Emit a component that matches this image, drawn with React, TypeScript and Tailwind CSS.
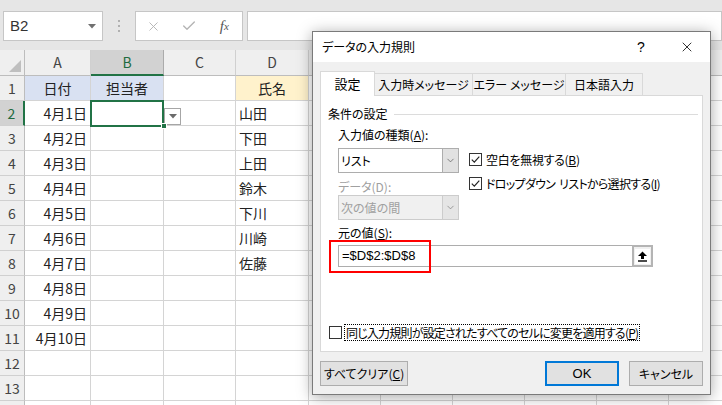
import { X, Check, ChevronDown } from "lucide-react";

const jp = "font-['Noto_Sans_CJK_JP',sans-serif]";

const cols = [
  { key: "A", w: "w-[66px]", label: "A" },
  { key: "B", w: "w-[73px]", label: "B" },
  { key: "C", w: "w-[72px]", label: "C" },
  { key: "D", w: "w-[73px]", label: "D" },
  // E–J sit under the dialog, their letters are never seen
  { key: "E", w: "w-[72px]", label: "" },
  { key: "F", w: "w-[72px]", label: "" },
  { key: "G", w: "w-[72px]", label: "" },
  { key: "H", w: "w-[72px]", label: "" },
  { key: "I", w: "w-[72px]", label: "" },
  { key: "J", w: "w-[72px]", label: "" },
];

interface Row {
  n: number;
  a?: string;
  b?: string;
  d?: string;
}

const rows: Row[] = [
  { n: 1, a: "日付", b: "担当者", d: "氏名" },
  { n: 2, a: "4月1日", d: "山田" },
  { n: 3, a: "4月2日", d: "下田" },
  { n: 4, a: "4月3日", d: "上田" },
  { n: 5, a: "4月4日", d: "鈴木" },
  { n: 6, a: "4月5日", d: "下川" },
  { n: 7, a: "4月6日", d: "川崎" },
  { n: 8, a: "4月7日", d: "佐藤" },
  { n: 9, a: "4月8日" },
  { n: 10, a: "4月9日" },
  { n: 11, a: "4月10日" },
  { n: 12 },
  { n: 13 },
  { n: 14 },
];

function CheckBox({ checked }: { checked: boolean }) {
  return (
    <div className="w-[13px] h-[13px] border border-[#333] bg-white flex items-center justify-center shrink-0">
      {checked && (
        <svg width="11" height="11" viewBox="0 0 11 11">
          <path d="M1.8 5.6 L4.3 8.1 L9.3 2.6" fill="none" stroke="#222" strokeWidth="1.2" />
        </svg>
      )}
    </div>
  );
}

function Cell({ row, col }: { row: Row; col: string }) {
  const w = cols.find((c) => c.key === col)!.w;
  let text = "";
  let cls = "";
  if (row.n === 1) {
    if (col === "A") { text = row.a!; cls = "bg-[#d9e1f2] justify-center"; }
    if (col === "B") { text = row.b!; cls = "bg-[#d9e1f2] justify-center"; }
    if (col === "D") { text = row.d!; cls = "bg-[#fff2cc] justify-center"; }
  } else {
    if (col === "A" && row.a) { text = row.a; cls = "justify-end pr-[3px]"; }
    if (col === "D" && row.d) { text = row.d; cls = "justify-start pl-[3px]"; }
  }
  const selected = row.n === 2 && col === "B";
  return (
    <div className={`${w} shrink-0 h-full border-r border-b border-[#d4d4d4] flex items-center ${cls} relative`}>
      {text}
      {selected && (
        <>
          <div className="absolute left-[-1px] top-[-1px] w-[74px] h-[27px] border-2 border-[#217346] z-10" />
          <div className="absolute right-[-4px] bottom-[-4px] w-[6px] h-[6px] bg-[#217346] border border-white z-20" />
          <div className="absolute left-[73px] top-[7px] w-[17px] h-[17px] bg-white border border-[#a6a6a6] flex items-center justify-center z-10">
            <svg width="8" height="5" viewBox="0 0 8 5">
              <path d="M0 0 H8 L4 4.5 Z" fill="#6b6b6b" />
            </svg>
          </div>
        </>
      )}
    </div>
  );
}

function Sheet() {
  return (
    <div className={`${jp} text-[14px] text-[#222]`}>
      {/* toolbar */}
      <div className="h-[50px] bg-[#e6e6e6] flex items-start pt-[11px] pl-[3px]">
        <div className="w-[100px] h-[30px] bg-white border border-[#c6c6c6] flex items-center pl-[6px] pr-[6px] text-[15px] text-[#333] font-['Liberation_Sans',sans-serif]">
          B2
          <svg className="ml-auto" width="8" height="5" viewBox="0 0 8 5">
            <path d="M0 0 H8 L4 4.5 Z" fill="#707070" />
          </svg>
        </div>
        <div className="w-[32px] h-[30px] flex flex-col items-center justify-center gap-[3px]">
          <div className="w-[2px] h-[2px] bg-[#b0b0b0]" />
          <div className="w-[2px] h-[2px] bg-[#b0b0b0]" />
          <div className="w-[2px] h-[2px] bg-[#b0b0b0]" />
        </div>
        <div className="w-[108px] h-[30px] bg-white border border-[#c6c6c6] flex items-center">
          <div className="w-[36px] flex justify-center text-[#b4b4b4]"><X size={15} strokeWidth={1.5} /></div>
          <div className="w-[36px] flex justify-center text-[#b4b4b4]"><Check size={16} strokeWidth={2} /></div>
          <div className="w-[36px] flex justify-center text-[#555] font-['Liberation_Serif',serif] italic text-[15px]">
            f<span className="text-[11px] mt-[3px]">x</span>
          </div>
        </div>
        <div className="flex-1 ml-[4px] h-[30px] bg-white border border-[#c6c6c6]" />
      </div>

      {/* column headers */}
      <div className="h-[26px] flex bg-[#efefef]">
        <div className="w-[25px] shrink-0 h-full border-r border-b border-[#bdbdbd] flex items-end justify-end p-[3px]">
          <svg width="12" height="12" viewBox="0 0 12 12">
            <path d="M12 0 V12 H0 Z" fill="#bfbfbf" />
          </svg>
        </div>
        {cols.map((c) => (
          <div
            key={c.key}
            className={`${c.w} shrink-0 h-full border-r flex items-center justify-center ${
              c.key === "B"
                ? "bg-[#d2d2d2] border-b-2 border-b-[#217346] border-r-[#ababab] text-[#1e6b40]"
                : "border-b border-[#d0d0d0] border-b-[#bdbdbd] text-[#444]"
            }`}
          >
            {c.label}
          </div>
        ))}
      </div>

      {/* rows */}
      {rows.map((r) => (
        <div key={r.n} className="h-[25px] flex">
          <div
            className={`w-[25px] shrink-0 h-full border-b border-[#d0d0d0] flex items-center justify-center ${
              r.n === 2
                ? "bg-[#d2d2d2] border-r-2 border-r-[#217346] text-[#1e6b40]"
                : "bg-[#efefef] border-r border-r-[#bdbdbd] text-[#444]"
            }`}
          >
            {r.n < 14 ? r.n : ""}
          </div>
          {cols.map((c) => (
            <Cell key={c.key} row={r} col={c.key} />
          ))}
        </div>
      ))}
    </div>
  );
}

function Dialog() {
  const tabs = ["入力時メッセージ", "エラー メッセージ", "日本語入力"];
  const tabW = ["w-[98px]", "w-[93px]", "w-[77px]"];
  return (
    <div
      className={`absolute left-[312px] top-[31px] w-[399px] h-[364px] border border-[#7a7a7a] bg-[#f0f0f0] shadow-[0_2px_14px_rgba(0,0,0,0.35)] flex flex-col ${jp} [font-feature-settings:'palt'] text-[12px] text-black z-30`}
    >
      {/* title */}
      <div className="h-[30px] bg-white flex items-center shrink-0">
        <div className="pl-[9px] text-[12px]">データの入力規則</div>
        <div className="ml-auto w-[46px] flex justify-center text-[14px] font-['Liberation_Sans',sans-serif]">?</div>
        <div className="w-[46px] flex justify-center">
          <X size={16} strokeWidth={1.2} />
        </div>
      </div>

      {/* tabs */}
      <div className="flex items-end px-[7px] pt-[9px] relative z-10">
        <div className="w-[55px] h-[25px] bg-white border border-[#d9d9d9] border-b-0 mb-[-1px] flex items-center justify-center text-[13px]">
          設定
        </div>
        {tabs.map((t, i) => (
          <div
            key={t}
            className={`${tabW[i]} h-[22px] bg-[#f0f0f0] border border-[#d9d9d9] border-l-0 border-b-0 flex items-center justify-center text-[12px] whitespace-nowrap`}
          >
            {t}
          </div>
        ))}
      </div>

      {/* panel */}
      <div className="mx-[7px] h-[257px] bg-white border border-[#d9d9d9] shrink-0 flex flex-col">
        <div className="mt-[10px] h-[16px] flex items-center pl-[7px]">
          <span>条件の設定</span>
          <div className="flex-1 ml-[6px] mr-[4px] border-t border-[#dcdcdc]" />
        </div>

        <div className="pl-[17px] flex flex-col">
          <div className="mt-[5px] h-[16px] flex items-center">
            入力値の種類(<span className="underline">A</span>):
          </div>
          <div className="flex">
            <div className="flex flex-col w-[121px]">
              <div className="mt-[5px] h-[25px] bg-white border border-[#adadad] flex items-center">
                <span className="pl-[2px] flex-1">リスト</span>
                <div className="w-[16px] h-full bg-[#e1e1e1] border-l border-[#adadad] flex items-center justify-center text-[#555]">
                  <ChevronDown size={11} strokeWidth={1.5} />
                </div>
              </div>
              <div className="mt-[6px] h-[16px] flex items-center text-[#a0a0a0]">データ(D):</div>
              <div className="h-[25px] bg-[#f0f0f0] border border-[#cccccc] flex items-center text-[#a0a0a0]">
                <span className="pl-[2px] flex-1">次の値の間</span>
                <div className="w-[16px] h-full bg-[#e5e5e5] border-l border-[#cccccc] flex items-center justify-center text-[#777]">
                  <ChevronDown size={11} strokeWidth={1.5} />
                </div>
              </div>
            </div>
            <div className="ml-[10px] pt-[10px] flex flex-col gap-[11px]">
              <div className="h-[13px] flex items-center gap-[4px]">
                <CheckBox checked />
                <span className="tracking-[-0.3px]">空白を無視する(<span className="underline">B</span>)</span>
              </div>
              <div className="h-[13px] flex items-center gap-[4px]">
                <CheckBox checked />
                <span className="tracking-[-0.7px] whitespace-nowrap">
                  ドロップダウン<span className="ml-[4px]">リストから選択する(<span className="underline">I</span>)</span>
                </span>
              </div>
            </div>
          </div>
          <div className="mt-[5px] h-[16px] flex items-center">
            元の値(<span className="underline">S</span>):
          </div>
          <div className="mt-[4px] w-[315px] h-[22px] bg-white border border-[#adadad] flex items-center relative">
            <span className="pl-[3px] flex-1 text-[13px] font-['Liberation_Sans',sans-serif]">=$D$2:$D$8</span>
            <div className="w-[21px] h-[22px] mr-[-1px] border-2 border-[#b4b4b4] bg-[#f0f0f0] flex items-center justify-center">
              <div className="w-[15px] h-[15px] bg-white flex items-center justify-center">
                <svg width="11" height="11" viewBox="0 0 11 11">
                  <path d="M5.5 0.5 L10 5 H7 V8 H4 V5 H1 Z" fill="#000" />
                  <rect x="1" y="9.3" width="9" height="1.4" fill="#000" />
                </svg>
              </div>
            </div>
            <div className="absolute left-[-10px] top-[-6px] w-[102px] h-[33px] border-2 border-[#ff0000]" />
          </div>
        </div>

        <div className="mt-[57px] pl-[8px] h-[17px] flex items-center">
          <CheckBox checked={false} />
          <span className="ml-[2px] h-[17px] flex items-center px-[1px] border border-dotted border-black tracking-[-0.8px] whitespace-nowrap">
            同じ入力規則が設定されたすべてのセルに変更を適用する(<span className="underline">P</span>)
          </span>
        </div>
      </div>

      {/* buttons */}
      <div className="mt-[9px] px-[7px] flex">
        <div className="w-[88px] h-[25px] bg-[#e1e1e1] border border-[#adadad] flex items-center justify-center">
          すべてクリア(<span className="underline">C</span>)
        </div>
        <div className="ml-auto w-[74px] h-[25px] bg-[#e1e1e1] border-2 border-[#0078d7] flex items-center justify-center font-['Liberation_Sans',sans-serif] text-[13px]">
          OK
        </div>
        <div className="ml-[10px] w-[74px] h-[25px] bg-[#e1e1e1] border border-[#adadad] flex items-center justify-center">
          キャンセル
        </div>
      </div>
    </div>
  );
}

export default function App() {
  return (
    <div className="w-[722px] h-[405px] overflow-hidden relative bg-white">
      <Sheet />
      <Dialog />
    </div>
  );
}
